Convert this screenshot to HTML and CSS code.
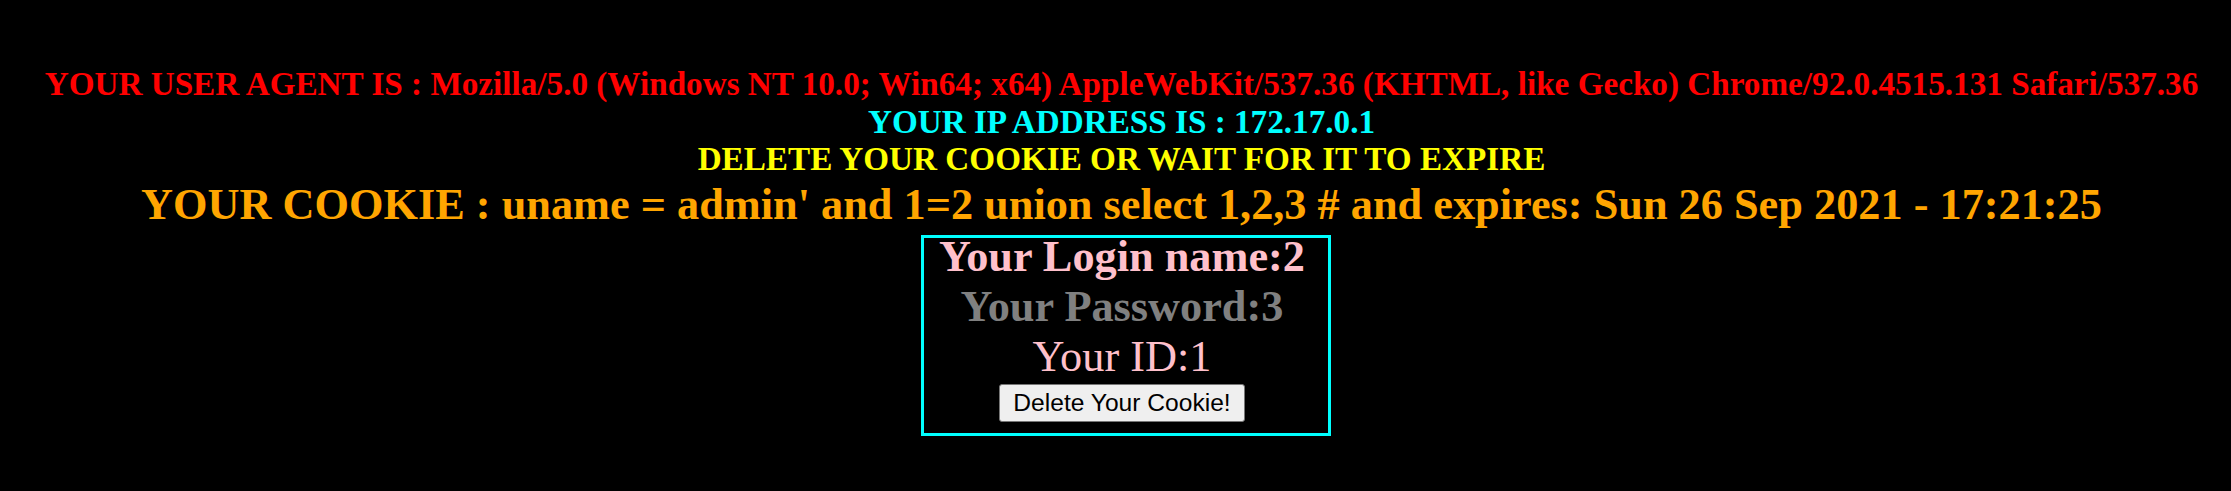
FILE: index.html
```html
<!DOCTYPE html>
<html>
<head>
<meta charset="utf-8">
<title>Less-20 Cookie Injection</title>
<link rel="stylesheet" href="styles.css">
</head>
<body>
<div class="page">
  <div class="info agent">YOUR USER AGENT IS : Mozilla/5.0 (Windows NT 10.0; Win64; x64) AppleWebKit/537.36 (KHTML, like Gecko) Chrome/92.0.4515.131 Safari/537.36</div>
  <div class="info ip">YOUR IP ADDRESS IS : 172.17.0.1</div>
  <div class="info expire">DELETE YOUR COOKIE OR WAIT FOR IT TO EXPIRE</div>
  <div class="cookie">YOUR COOKIE : uname = admin' and 1=2 union select 1,2,3 # and expires: Sun 26 Sep 2021 - 17:21:25</div>
  <div class="box">
    <div class="row login">Your Login name:2</div>
    <div class="row password">Your Password:3</div>
    <div class="row id">Your ID:1</div>
    <form class="form">
      <button type="button" class="delete">Delete Your Cookie!</button>
    </form>
  </div>
</div>
</body>
</html>
```
FILE: styles.css
```css
html, body {
  margin: 0;
  padding: 0;
  background: #000000;
}

.page {
  padding: 65px 0 0 12px;
  text-align: center;
  font-family: "Liberation Serif", "Times New Roman", serif;
  font-weight: bold;
}

.info {
  font-size: 33.2px;
  line-height: 37.5px;
  white-space: nowrap;
}

.agent { color: #ff0000; }
.ip { color: #00ffff; }
.expire { color: #ffff00; }

.cookie {
  color: #ffa500;
  font-size: 44.3px;
  line-height: 54px;
  margin-bottom: 3px;
  white-space: nowrap;
}

.box {
  display: inline-flex;
  flex-direction: column;
  align-items: center;
  margin-left: 9px;
  border: 3px solid #00ffff;
  padding: 0 23px 11px 15px;
}

.row {
  font-size: 44.3px;
  line-height: 50px;
  white-space: nowrap;
}

.login {
  color: #ffc0cb;
  margin-top: -6px;
}

.password {
  color: #808080;
}

.id {
  color: #ffc0cb;
  font-weight: normal;
}

.form {
  margin: 2px 0 0 0;
  display: flex;
  justify-content: center;
}

.delete {
  height: 38px;
  padding: 0 13px;
  font-family: "Liberation Sans", Arial, sans-serif;
  font-size: 24.6px;
  color: #000000;
  background: #efefef;
  border: 1px solid #767676;
  border-radius: 3px;
}
```
